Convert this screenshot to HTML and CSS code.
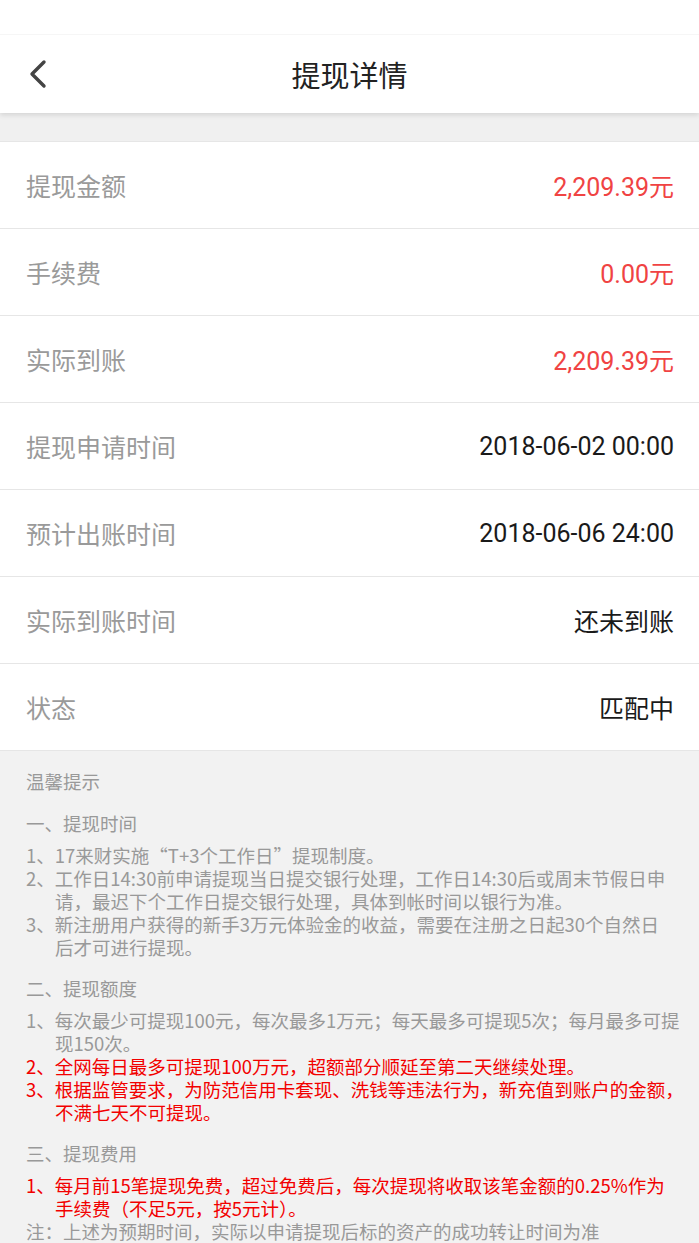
FILE: index.html
```html
<!DOCTYPE html>
<html lang="zh-CN">

<head>
	<meta charset="UTF-8">
	<meta name="viewport" content="width=device-width, initial-scale=1.0">
	<title>提现详情</title>
	<link rel="stylesheet" href="styles.css">
</head>

<body>
	<header class="top-bar">
		<div class="status-space"></div>
		<div class="nav-bar">
			<a class="back-btn" href="#">
				<svg width="20" height="30" viewBox="0 0 20 30">
					<polyline points="16,3 4,15 16,27" fill="none" stroke="#444" stroke-width="3.4"
						stroke-linecap="round" stroke-linejoin="round" />
				</svg>
			</a>
			<h1 class="nav-title">提现详情</h1>
		</div>
	</header>

	<div class="band"></div>

	<ul class="detail-list">
		<li class="detail-row">
			<span class="label">提现金额</span>
			<span class="value red">2,209.39元</span>
		</li>
		<li class="detail-row">
			<span class="label">手续费</span>
			<span class="value red">0.00元</span>
		</li>
		<li class="detail-row">
			<span class="label">实际到账</span>
			<span class="value red">2,209.39元</span>
		</li>
		<li class="detail-row">
			<span class="label">提现申请时间</span>
			<span class="value">2018-06-02 00:00</span>
		</li>
		<li class="detail-row">
			<span class="label">预计出账时间</span>
			<span class="value">2018-06-06 24:00</span>
		</li>
		<li class="detail-row">
			<span class="label">实际到账时间</span>
			<span class="value">还未到账</span>
		</li>
		<li class="detail-row">
			<span class="label">状态</span>
			<span class="value">匹配中</span>
		</li>
	</ul>

	<section class="tips">
		<p class="tips-title">温馨提示</p>

		<p class="tip-heading">一、提现时间</p>
		<div class="tip-list">
			<p class="tip">1、17来财实施“T+3个工作日”提现制度。</p>
			<p class="tip">2、工作日14:30前申请提现当日提交银行处理，工作日14:30后或周末节假日申<br>请，最迟下个工作日提交银行处理，具体到帐时间以银行为准。</p>
			<p class="tip">3、新注册用户获得的新手3万元体验金的收益，需要在注册之日起30个自然日<br>后才可进行提现。</p>
		</div>

		<p class="tip-heading">二、提现额度</p>
		<div class="tip-list">
			<p class="tip">1、每次最少可提现100元，每次最多1万元；每天最多可提现5次；每月最多可提<br>现150次。</p>
			<p class="tip red-tip">2、全网每日最多可提现100万元，超额部分顺延至第二天继续处理。</p>
			<p class="tip red-tip">3、根据监管要求，为防范信用卡套现、洗钱等违法行为，新充值到账户的金额，<br>不满七天不可提现。</p>
		</div>

		<p class="tip-heading">三、提现费用</p>
		<div class="tip-list">
			<p class="tip red-tip">1、每月前15笔提现免费，超过免费后，每次提现将收取该笔金额的0.25%作为<br>手续费（不足5元，按5元计）。</p>
			<p class="note">注：上述为预期时间，实际以申请提现后标的资产的成功转让时间为准</p>
		</div>
	</section>
</body>

</html>
```

FILE: styles.css
```css
body {
	margin: 0;
	background-color: #f2f2f2;
	font-family: Roboto, "Noto Sans CJK SC", sans-serif;
	color: #222;
}

p {
	margin: 0;
}

.top-bar {
	position: relative;
	z-index: 1;
	background-color: #fff;
	box-shadow: 0 2px 5px rgba(0, 0, 0, 0.12);
}

.status-space {
	height: 34px;
	border-bottom: 1px solid #f6f6f6;
}

.nav-bar {
	display: flex;
	align-items: center;
	justify-content: center;
	height: 78px;
	position: relative;
}

.back-btn {
	position: absolute;
	left: 28px;
	top: 24px;
	display: flex;
}

.nav-title {
	margin: 0;
	font-size: 29px;
	font-weight: normal;
	color: #222;
}

.band {
	height: 28px;
	background-color: #f0f0f0;
}

.detail-list {
	list-style: none;
	margin: 0;
	padding: 0;
	background-color: #fff;
	border-top: 1px solid #e6e6e6;
}

.detail-row {
	display: flex;
	align-items: center;
	justify-content: space-between;
	height: 86px;
	padding: 0 25px 0 26px;
	border-bottom: 1px solid #e6e6e6;
	font-size: 25px;
}

.label {
	color: #9a9a9a;
}

.value {
	color: #1a1a1a;
}

.value.red {
	color: #f04343;
}

.tips {
	padding: 19px 6px 0 26px;
	font-size: 18.5px;
	line-height: 23px;
	color: #999;
	font-family: "Noto Sans CJK SC", sans-serif;
}

.tips-title {
	margin-bottom: 19px;
}

.tip-heading {
	margin-bottom: 9px;
}

.tip-list {
	margin-bottom: 18px;
}

.tip {
	padding-left: 29px;
	text-indent: -29px;
}

.red-tip {
	color: #f20000;
}
```
